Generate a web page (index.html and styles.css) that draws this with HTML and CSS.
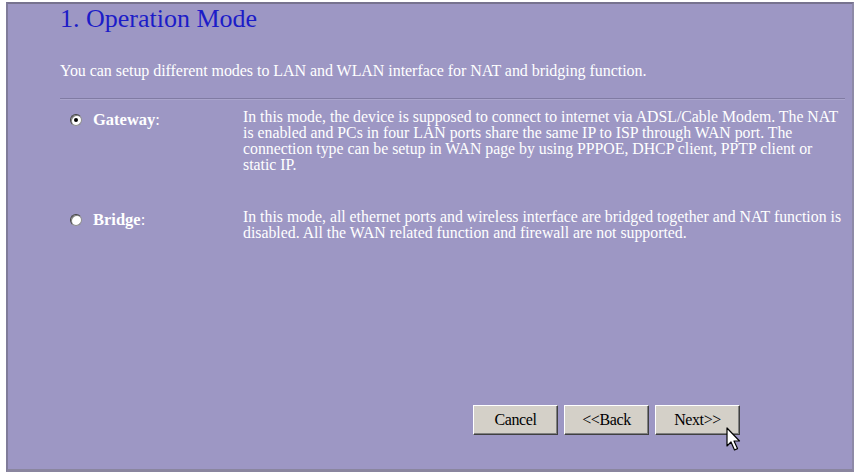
FILE: index.html
```html
<!DOCTYPE html>
<html>
<head>
<meta charset="utf-8">
<link rel="stylesheet" href="styles.css">
</head>
<body>
<div class="frame">
  <h1 class="title">1. Operation Mode</h1>
  <p class="intro">You can setup different modes to LAN and WLAN interface for NAT and bridging function.</p>
  <div class="rule"></div>
  <div class="modes">
    <div class="mode">
      <div class="opt"><span class="radio checked"></span><span class="label">Gateway</span>:</div>
      <div class="desc">In this mode, the device is supposed to connect to internet via ADSL/Cable Modem. The NAT<br>is enabled and PCs in four LAN ports share the same IP to ISP through WAN port. The<br>connection type can be setup in WAN page by using PPPOE, DHCP client, PPTP client or<br>static IP.</div>
    </div>
    <div class="mode">
      <div class="opt"><span class="radio"></span><span class="label">Bridge</span>:</div>
      <div class="desc">In this mode, all ethernet ports and wireless interface are bridged together and NAT function is<br>disabled. All the WAN related function and firewall are not supported.</div>
    </div>
  </div>
  <div class="buttons">
    <button class="btn">Cancel</button>
    <button class="btn">&lt;&lt;Back</button>
    <button class="btn">Next&gt;&gt;</button>
    <svg class="cursor" width="16" height="26" viewBox="0 0 16 26"><path d="M1 1 L1 19 L5 15 L8.5 23 L11.5 21.6 L8 14 L13.5 14 Z" fill="#fff" stroke="#000" stroke-width="1.2" stroke-linejoin="round"/></svg>
  </div>
</div>
</body>
</html>
```
FILE: styles.css
```css
html, body {
  margin: 0;
  padding: 0;
  background: #ffffff;
}
body {
  width: 859px;
  height: 476px;
  overflow: hidden;
  font-family: "Liberation Serif", "Times New Roman", serif;
}
.frame {
  position: relative;
  margin: 2px 0 0 6px;
  width: 848px;
  height: 470px;
  box-sizing: border-box;
  background: #9d97c4;
  border-top: 2px solid #77738f;
  border-left: 2px solid #807c9a;
  border-bottom: 3px solid #8a869f;
  border-right: 2px solid #8e8aa8;
  padding: 0 0 0 52px;
  color: #ffffff;
}
.title {
  margin: 0;
  padding-top: 0;
  font-weight: normal;
  font-size: 26px;
  line-height: 30px;
  color: #1c1cc8;
}
.intro {
  margin: 28px 0 0 0;
  font-size: 16px;
  line-height: 18px;
  letter-spacing: -0.05px;
}
.rule {
  margin: 18px 0 0 0;
  width: 785px;
  height: 0;
  border-top: 1px solid #807ba3;
  border-bottom: 1px solid #aaa5cc;
}
.modes {
  display: flex;
  flex-direction: column;
  gap: 36px;
  margin-top: 9px;
  padding-left: 10px;
}
.mode {
  display: grid;
  grid-template-columns: 173px 610px;
  align-items: start;
}
.opt {
  display: flex;
  align-items: center;
  gap: 11px;
  padding-top: 2px;
  font-size: 16.5px;
  line-height: 18px;
}
.label {
  font-weight: bold;
  margin-right: -11px;
}
.radio {
  width: 10px;
  height: 10px;
  border-radius: 50%;
  background: #ffffff;
  border: 1px solid #8d8d8d;
  border-top-color: #404040;
  border-left-color: #404040;
  box-shadow: inset 1px 1px 0 #808080;
  display: inline-flex;
  align-items: center;
  justify-content: center;
}
.radio.checked::after {
  content: "";
  width: 4px;
  height: 4px;
  border-radius: 50%;
  background: #000000;
}
.desc {
  font-size: 15.8px;
  line-height: 16px;
  letter-spacing: 0;
  white-space: nowrap;
}
.buttons {
  position: absolute;
  left: 465px;
  top: 401px;
  display: flex;
  gap: 6px;
}
.btn {
  width: 85px;
  height: 30px;
  background: #d4d0c8;
  font-family: "Liberation Serif", "Times New Roman", serif;
  font-size: 16px;
  color: #000000;
  letter-spacing: -0.4px;
  border: 1px solid;
  border-color: #ffffff #404040 #404040 #ffffff;
  box-shadow: inset -1px -1px 0 #808080;
  padding: 0;
}
.cursor {
  position: absolute;
  left: 253px;
  top: 22px;
}
```
